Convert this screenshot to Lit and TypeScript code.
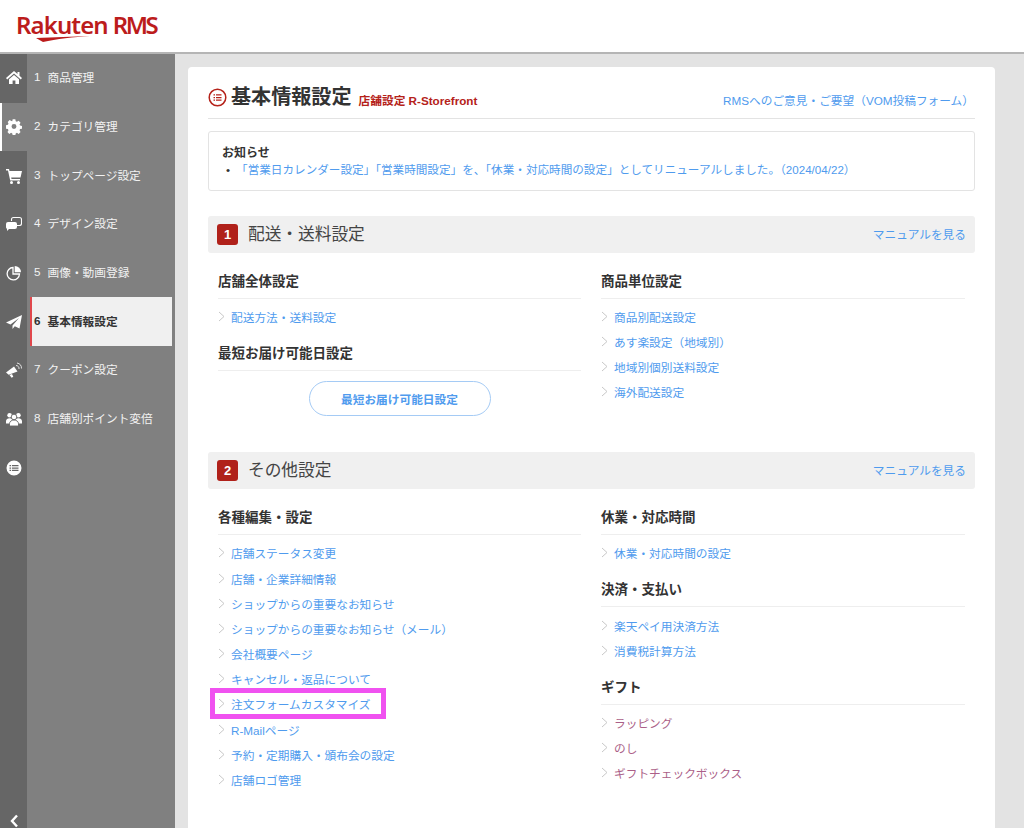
import { css, html, LitElement, svg } from 'lit';
import { customElement } from 'lit/decorators.js';

const icons = [
  // home
  svg`<path d="M8 1 0 8l1.2 1.4L8 3.4l6.8 6L16 8l-2.5-2.2V2h-2v2L8 1zM8 5 3 9.3V14h3.6v-3.4h2.8V14H13V9.3L8 5z"/>`,
  // gear
  svg`<path fill-rule="evenodd" d="M6.6 1h2.8l.4 2 1.3.6 1.8-1.1 2 2-1.1 1.8.6 1.3 2 .4v2.8l-2 .4-.6 1.3 1.1 1.8-2 2-1.8-1.1-1.3.6-.4 2H6.600l-.4-2-1.300-.6-1.800 1.100-2-2 1.100-1.800-.6-1.300-2-.4V7.200l2-.4.6-1.300L1.400 3.700l2-2 1.800 1.100L6.200 3zM8 6a2.600 2.600 0 1 0 0 5.200A2.600 2.600 0 0 0 8 6z" transform="translate(.4 -.6) scale(.95)"/>`,
  // cart
  svg`<path d="M0 1h3l.5 2H16l-1.500 6.500H5.200l.3 1.500H14v1.500H4.200L2 2.500H0z"/><circle cx="5.500" cy="14.500" r="1.500"/><circle cx="12.500" cy="14.500" r="1.500"/>`,
  // design windows
  svg`<path fill="none" stroke="currentColor" stroke-width="1.100" d="M5.500 5V3.500a2 2 0 0 1 2-2h6a2 2 0 0 1 2 2v4a2 2 0 0 1-2 2H11"/><path d="M2 6h7a2 2 0 0 1 2 2v3a2 2 0 0 1-2 2H3l-2 2v-2.200A2 2 0 0 1 0 11V8a2 2 0 0 1 2-2z"/>`,
  // pie: open ring with a wedge at the top right
  svg`<path fill="none" stroke="currentColor" stroke-width="1.300" d="M7 2.500A6.200 6.200 0 1 0 13.500 9H7z"/><path d="M8.700 1A6.300 6.300 0 0 1 15 7.300H8.700z"/>`,
  // paper plane
  svg`<path d="M16 1 13.500 14.500 8.800 12.300 6.500 15V11.500L13 4 4.500 10.500 0 8.500z"/>`,
  // bullhorn with waves
  svg`<path d="M0 10.500 8 4.500l3.500 5-8.800 3.200zM3.500 13l2.500-1 1.300 2.800-1.700.9z"/><path fill="none" stroke="currentColor" stroke-width=".8" d="M10 3.500a3 3 0 0 1 3 3.500M11 1a5.500 5.500 0 0 1 4.500 5.500"/>`,
  // users, middle one in front
  svg`<circle cx="3.600" cy="4.300" r="2.300"/><circle cx="12.400" cy="4.300" r="2.300"/><path d="M0 12.500v-2.300c0-1.700 1.500-3 3.600-3s3.600 1.300 3.600 3v2.300zM8.800 12.500v-2.300c0-1.700 1.500-3 3.600-3s3.600 1.300 3.600 3v2.300z"/><g stroke="#666" stroke-width=".9"><circle cx="8" cy="6" r="2.800"/><path d="M3.500 15v-2.300C3.500 10.600 5.500 9 8 9s4.500 1.600 4.500 3.700V15z"/></g>`,
  // list in circle
  svg`<path fill-rule="evenodd" d="M8 .5a7.500 7.500 0 1 1 0 15 7.500 7.500 0 0 1 0-15zM3.500 5v1.300h1.600V5zm2.500 0v1.300h6.500V5zM3.500 7.400v1.300h1.600V7.400zm2.500 0v1.300h6.500V7.400zM3.500 9.800v1.300h1.600V9.800zm2.500 0v1.300h6.500V9.800z"/>`,
];

const menu = [
  '商品管理',
  'カテゴリ管理',
  'トップページ設定',
  'デザイン設定',
  '画像・動画登録',
  '基本情報設定',
  'クーポン設定',
  '店舗別ポイント変倍',
];

@customElement('app-root')
export class AppRoot extends LitElement {
  static override styles = css`
    :host {
      display: block;
      width: 1024px;
      height: 828px;
      overflow: hidden;
      font-family: "Liberation Sans", "Noto Sans CJK JP", sans-serif;
      font-size: 11.7px;
      color: #333;
      background: #e3e3e3;
    }
    a {
      color: #4f9bee;
      text-decoration: none;
    }
    .header {
      height: 52px;
      background: #fff;
      border-bottom: 2px solid #b5b5b5;
      box-sizing: content-box;
      padding-left: 16px;
      display: flex;
      align-items: flex-start;
    }
    .logo {
      margin-top: 11px;
      display: flex;
      flex-direction: column;
      color: #bc1c1c;
      font-family: "Noto Sans", "Liberation Sans", sans-serif;
      font-weight: 600;
      font-size: 24px;
      line-height: 28px;
      letter-spacing: -0.9px;
      white-space: nowrap;
    }
    .logo svg {
      display: block;
      margin: -3px 0 0 20px;
    }
    .logo b {
      font-weight: 600;
      margin-left: 5px;
      letter-spacing: -2.5px;
    }
    .body {
      display: flex;
      height: 774px;
    }
    .side {
      width: 175px;
      flex: none;
      display: flex;
      flex-direction: column;
      background: linear-gradient(to right, #666 27px, #808080 27px);
    }
    .item {
      height: 48.7px;
      flex: none;
      display: flex;
      align-items: center;
      color: #f2f2f2;
    }
    .rail {
      width: 27px;
      height: 100%;
      flex: none;
      display: flex;
      align-items: center;
      justify-content: center;
      box-sizing: border-box;
    }
    .rail svg {
      width: 16px;
      height: 16px;
      fill: #fff;
      color: #fff;
    }
    .rail.on {
      background: #808080;
      border-left: 2px solid #fff;
      padding-right: 2px;
    }
    .label {
      flex: 1;
      height: 100%;
      display: flex;
      align-items: center;
      box-sizing: border-box;
      padding: 0 0 3px 7px;
      margin-right: 3px;
      gap: 7px;
    }
    .item.active .label {
      background: #f0f0f0;
      color: #333;
      font-weight: 700;
      border-left: 2px solid #e0474c;
      margin-left: 3px;
      padding-left: 2px;
    }
    .back {
      margin-top: auto;
      width: 27px;
      height: 14px;
      display: flex;
      justify-content: center;
    }
    .main {
      flex: 1;
      padding: 13px 29px 0 13px;
    }
    .card {
      background: #fff;
      border-radius: 4px;
      height: 800px;
      padding: 0 20px;
    }
    .page-head {
      height: 52px;
      border-bottom: 1px solid #e3e3e3;
      display: flex;
      align-items: center;
      gap: 4px;
      padding-top: 9px;
      box-sizing: border-box;
    }
    .page-head svg {
      width: 19px;
      height: 19px;
      flex: none;
    }
    .page-head h1 {
      margin: 0;
      font-size: 20.1px;
      line-height: 28px;
      font-weight: 700;
      color: #333;
    }
    .page-head span {
      color: #b5221a;
      font-weight: 700;
      font-size: 11.7px;
      margin: 4px 0 0 3px;
    }
    .page-head a {
      margin: 5px 1px 0 auto;
    }
    .notice {
      margin-top: 12px;
      height: 60px;
      box-sizing: border-box;
      border: 1px solid #e3e3e3;
      border-radius: 3px;
      padding: 13px 13px 0;
      line-height: 16.5px;
    }
    .notice strong {
      display: block;
      font-size: 12px;
    }
    .notice div {
      display: flex;
      gap: 6px;
      padding-left: 4px;
      font-size: 11.6px;
    }
    .sec {
      margin-top: 25px;
      height: 37px;
      background: #f0f0f0;
      border-radius: 3px;
      display: flex;
      align-items: center;
      padding: 0 9px;
    }
    .sec.two {
      margin-top: 36px;
    }
    .sec i {
      width: 21px;
      height: 21px;
      border-radius: 3px;
      background: #b0211a;
      color: #fff;
      font-style: normal;
      font-weight: 700;
      font-size: 13px;
      display: flex;
      align-items: center;
      justify-content: center;
      margin-right: 10px;
    }
    .sec h2 {
      margin: 0 0 3px;
      font-size: 16.7px;
      font-weight: 400;
      color: #444;
    }
    .sec a {
      margin: 0 0 3px auto;
    }
    .cols {
      display: grid;
      grid-template-columns: 363px 364px;
      gap: 20px;
      padding: 0 10px;
      margin-top: 16px;
    }
    .cols h3 {
      margin: 0;
      height: 29px;
      line-height: 25px;
      font-size: 13.5px;
      font-weight: 700;
      color: #333;
      border-bottom: 1px solid #eee;
    }
    .links {
      margin: 5px 0 12px;
      padding: 0;
      list-style: none;
    }
    .cols.first .links {
      margin-top: 4.5px;
    }
    .links li {
      height: 25.2px;
      display: flex;
      align-items: center;
      gap: 6px;
      white-space: nowrap;
    }
    .links svg {
      width: 7px;
      height: 11px;
      flex: none;
      fill: none;
      stroke: #c8c8c8;
      stroke-width: 1;
    }
    .links.gift a {
      color: #ab5f88;
    }
    .links li.hl {
      position: relative;
    }
    .links li.hl::after {
      content: '';
      position: absolute;
      left: -8px;
      top: -3px;
      width: 176px;
      height: 31px;
      box-sizing: border-box;
      border: 5px solid #f052f0;
    }
    .more {
      display: flex;
      justify-content: center;
      margin-top: 10px;
    }
    .btn {
      width: 182px;
      height: 35px;
      box-sizing: border-box;
      border: 1px solid #a5cbf5;
      border-radius: 18px;
      display: flex;
      align-items: center;
      justify-content: center;
      font-weight: 700;
    }
  `;

  private chevron() {
    return html`<svg viewBox="0 0 7 11"><path d="M1 1l5 4.500-5 4.500" /></svg>`;
  }

  private links(items: string[], gift = false, mark = '') {
    return html`<ul class="links ${gift ? 'gift' : ''}">
      ${items.map(
        (t) => html`<li class=${t === mark ? 'hl' : ''}>
          ${this.chevron()}<a href="#">${t}</a>
        </li>`
      )}
    </ul>`;
  }

  private sidebar() {
    return html`<nav class="side">
      ${icons.map((ic, i) => {
        const label = menu[i];
        return html`<div class="item ${i === 5 ? 'active' : ''}">
          <div class="rail ${i === 1 ? 'on' : ''}">
            <svg viewBox="0 0 16 16">${ic}</svg>
          </div>
          ${label
            ? html`<div class="label"><span>${i + 1}</span><span>${label}</span></div>`
            : ''}
        </div>`;
      })}
      <div class="back">
        <svg viewBox="0 0 10 14" width="10" height="14">
          <path d="M8 1.500 3 7l5 5.500" fill="none" stroke="#fff" stroke-width="2.400" />
        </svg>
      </div>
    </nav>`;
  }

  override render() {
    return html`
      <div class="header">
        <div class="logo">
          <span>Rakuten<b>RMS</b></span>
          <svg width="54" height="6" viewBox="0 0 54 6">
            <path d="M0 2 54 0C38 1 20 3 7 6z" fill="#bc1c1c" />
          </svg>
        </div>
      </div>
      <div class="body">
        ${this.sidebar()}
        <div class="main">
          <div class="card">
            <div class="page-head">
              <svg viewBox="0 0 19 19">
                <circle cx="9.500" cy="9.500" r="8.300" fill="none" stroke="#b5221a" stroke-width="1.500" />
                <path d="M5.500 6.300h1.500v1.300H5.500zM8 6.300h5.500v1.300H8zM5.500 8.900h1.500v1.300H5.500zM8 8.900h5.500v1.300H8zM5.500 11.500h1.500v1.300H5.500zM8 11.500h5.500v1.300H8z" fill="#b5221a" />
              </svg>
              <h1>基本情報設定</h1>
              <span>店舗設定 R-Storefront</span>
              <a href="#">RMSへのご意見・ご要望（VOM投稿フォーム）</a>
            </div>
            <div class="notice">
              <strong>お知らせ</strong>
              <div>
                <span>•</span>
                <a href="#">「営業日カレンダー設定」「営業時間設定」を、「休業・対応時間の設定」としてリニューアルしました。（2024/04/22）</a>
              </div>
            </div>

            <div class="sec">
              <i>1</i>
              <h2>配送・送料設定</h2>
              <a href="#">マニュアルを見る</a>
            </div>
            <div class="cols first">
              <div>
                <h3>店舗全体設定</h3>
                ${this.links(['配送方法・送料設定'])}
                <h3>最短お届け可能日設定</h3>
                <div class="more"><a class="btn" href="#">最短お届け可能日設定</a></div>
              </div>
              <div>
                <h3>商品単位設定</h3>
                ${this.links(['商品別配送設定', 'あす楽設定（地域別）', '地域別個別送料設定', '海外配送設定'])}
              </div>
            </div>

            <div class="sec two">
              <i>2</i>
              <h2>その他設定</h2>
              <a href="#">マニュアルを見る</a>
            </div>
            <div class="cols">
              <div>
                <h3>各種編集・設定</h3>
                ${this.links(
                  [
                    '店舗ステータス変更',
                    '店舗・企業詳細情報',
                    'ショップからの重要なお知らせ',
                    'ショップからの重要なお知らせ（メール）',
                    '会社概要ページ',
                    'キャンセル・返品について',
                    '注文フォームカスタマイズ',
                    'R-Mailページ',
                    '予約・定期購入・頒布会の設定',
                    '店舗ロゴ管理',
                  ],
                  false,
                  '注文フォームカスタマイズ'
                )}
              </div>
              <div>
                <h3>休業・対応時間</h3>
                ${this.links(['休業・対応時間の設定'])}
                <h3>決済・支払い</h3>
                ${this.links(['楽天ペイ用決済方法', '消費税計算方法'])}
                <h3>ギフト</h3>
                ${this.links(['ラッピング', 'のし', 'ギフトチェックボックス'], true)}
              </div>
            </div>
          </div>
        </div>
      </div>
    `;
  }
}

declare global {
  interface HTMLElementTagNameMap {
    'app-root': AppRoot;
  }
}
